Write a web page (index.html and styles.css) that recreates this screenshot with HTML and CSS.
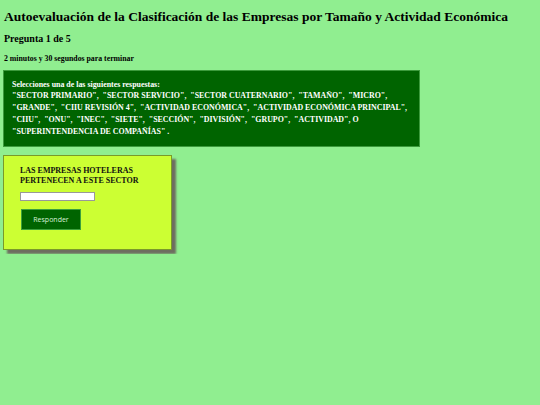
FILE: index.html
```html
<!DOCTYPE html>
<html lang="es">
<head>
<meta charset="utf-8">
<link rel="stylesheet" href="styles.css">
</head>
<body>
<h1 class="title">Autoevaluación de la Clasificación de las Empresas por Tamaño y Actividad Económica</h1>
<h2 class="question-num">Pregunta 1 de 5</h2>
<p class="timer">2 minutos y 30 segundos para terminar</p>
<div class="answers">
<p class="answers-head">Selecciones una de las siguientes respuestas:</p>
<p class="answers-list">"SECTOR PRIMARIO",&nbsp; "SECTOR SERVICIO",&nbsp; "SECTOR CUATERNARIO",&nbsp; "TAMAÑO",&nbsp; "MICRO",&nbsp; "GRANDE",&nbsp; "CIIU REVISIÓN 4",&nbsp; "ACTIVIDAD ECONÓMICA",&nbsp; "ACTIVIDAD ECONÓMICA PRINCIPAL",&nbsp; "CIIU",&nbsp; "ONU",&nbsp; "INEC",&nbsp; "SIETE",&nbsp; "SECCIÓN",&nbsp; "DIVISIÓN",&nbsp; "GRUPO",&nbsp; "ACTIVIDAD", O "SUPERINTENDENCIA DE COMPAÑÍAS" .</p>
</div>
<div class="card">
<p class="card-q">LAS EMPRESAS HOTELERAS PERTENECEN A ESTE SECTOR</p>
<input class="card-input" type="text">
<button class="card-btn">Responder</button>
</div>
</body>
</html>
```
FILE: styles.css
```css
html, body {
  margin: 0;
  background: #90ee90;
}
body {
  padding: 4px 3px;
  font-family: "Liberation Serif", "Times New Roman", serif;
  color: #000;
}
.title {
  margin: 4px 0 0 1px;
  font-size: 13.5px;
  line-height: 18px;
}
.question-num {
  margin: 6px 0 0 1px;
  font-size: 10px;
  line-height: 14px;
}
.timer {
  margin: 7px 0 0 1px;
  font-size: 7.8px;
  font-weight: bold;
  line-height: 12px;
}
.answers {
  margin-top: 5px;
  width: 417px;
  box-sizing: border-box;
  background: #006400;
  border: 1px solid #3c9a3c;
  padding: 8px 8px 8px 8px;
  color: #fff;
  font-weight: bold;
  font-size: 7.9px;
}
.answers p { margin: 0; }
.answers-head {
  line-height: 11px;
}
.answers-list {
  line-height: 12px;
}
.card {
  margin-top: 8px;
  width: 169px;
  height: 95px;
  box-sizing: border-box;
  background: #ccff33;
  border: 1px solid #7a9a2a;
  box-shadow: 4px 4px 2px #6e6e60;
  padding: 10px 16px;
  display: flex;
  flex-direction: column;
  align-items: flex-start;
}
.card-q {
  margin: 0;
  font-size: 8px;
  font-weight: bold;
  line-height: 10px;
  color: #111;
}
.card-input {
  margin-top: 6px;
  width: 75px;
  height: 9px;
  box-sizing: border-box;
  border: 1px solid #999;
  background: #fff;
  padding: 0;
}
.card-btn {
  margin-top: 8px;
  margin-left: 1px;
  width: 60px;
  height: 21px;
  background: #006400;
  border: 1px solid #3ca03c;
  color: #d8f0d8;
  font-family: "Open Sans", "DejaVu Sans", sans-serif;
  font-size: 7px;
  padding: 0;
}
```
